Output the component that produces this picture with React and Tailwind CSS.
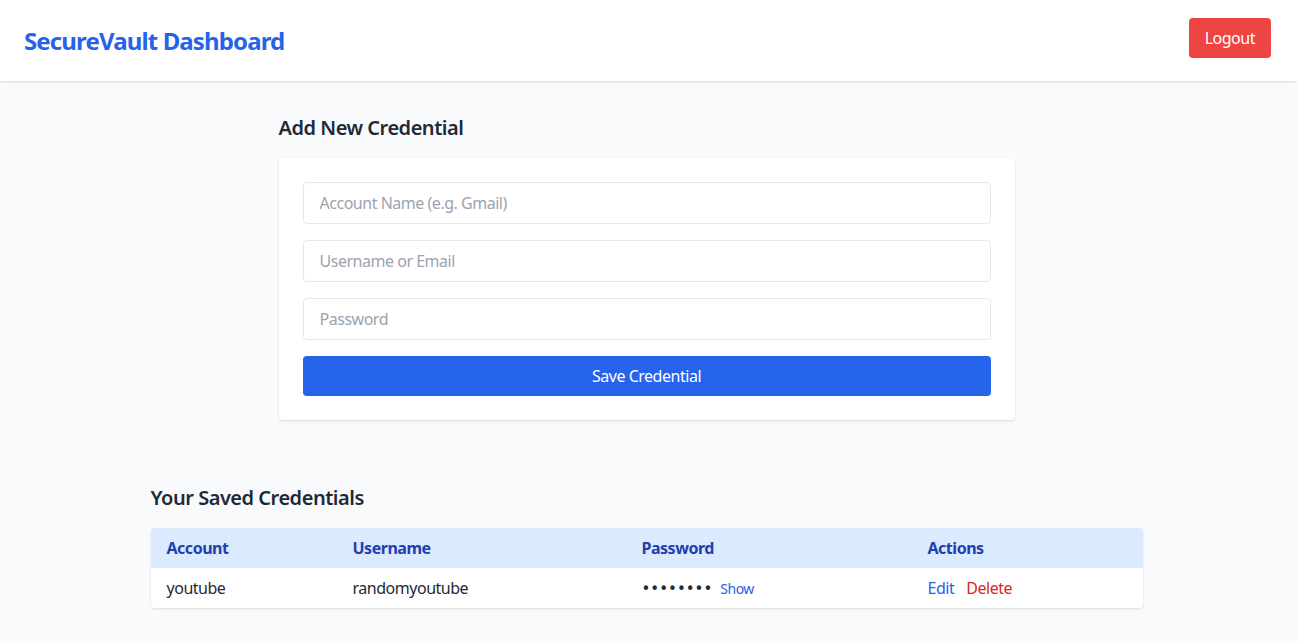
import React, { useState } from 'react';

const App = () => {
  const [show, setShow] = useState(false);

  return (
    <div className="min-h-screen bg-[#f9fafb] font-['Noto_Sans',sans-serif] tracking-[-0.03em]">
      <header className="bg-white shadow flex items-center justify-between pl-6 pr-[26px] h-[81px]">
        <h1 className="text-2xl font-bold text-[#2563eb] tracking-[-0.036em]">SecureVault Dashboard</h1>
        <button className="bg-[#ef4444] text-white px-4 h-10 rounded -mt-[5px]">Logout</button>
      </header>

      <main className="pt-[33px] pb-8 pr-1">
        <div className="max-w-3xl mx-auto px-4">
          <h2 className="text-xl font-semibold text-[#1f2937] mb-4">Add New Credential</h2>
          <form className="bg-white rounded shadow p-6 flex flex-col gap-4" onSubmit={(e) => e.preventDefault()}>
            <input
              type="text"
              placeholder="Account Name (e.g. Gmail)"
              className="w-full h-[42px] px-4 border border-[#e5e7eb] rounded placeholder-[#9ca3af] focus:outline-none"
            />
            <input
              type="text"
              placeholder="Username or Email"
              className="w-full h-[42px] px-4 border border-[#e5e7eb] rounded placeholder-[#9ca3af] focus:outline-none"
            />
            <input
              type="password"
              placeholder="Password"
              className="w-full h-[42px] px-4 border border-[#e5e7eb] rounded placeholder-[#9ca3af] focus:outline-none"
            />
            <button type="submit" className="w-full h-10 bg-[#2563eb] text-white rounded">
              Save Credential
            </button>
          </form>
        </div>

        <div className="max-w-5xl mx-auto px-4 mt-16">
          <h2 className="text-xl font-semibold text-[#1f2937] mb-4">Your Saved Credentials</h2>
          <div className="bg-white rounded shadow overflow-hidden">
            <table className="w-full text-left table-fixed">
              <thead className="bg-[#dbeafe] text-[#1e40af]">
                <tr className="h-10">
                  <th className="px-4 font-bold w-[186px]">Account</th>
                  <th className="px-4 font-bold w-[289px]">Username</th>
                  <th className="px-4 font-bold w-[286px]">Password</th>
                  <th className="px-4 font-bold">Actions</th>
                </tr>
              </thead>
              <tbody className="text-[#1f2937]">
                <tr className="h-10">
                  <td className="px-4">youtube</td>
                  <td className="px-4">randomyoutube</td>
                  <td className="px-4">
                    <span className="font-['DejaVu_Sans',sans-serif] text-[15px] tracking-normal">{show ? 'secret123' : '••••••••'}</span>
                    <button onClick={() => setShow(!show)} className="ml-2 text-sm text-[#2563eb]">
                      {show ? 'Hide' : 'Show'}
                    </button>
                  </td>
                  <td className="px-4">
                    <button className="text-[#2563eb] mr-3">Edit</button>
                    <button className="text-[#dc2626]">Delete</button>
                  </td>
                </tr>
              </tbody>
            </table>
          </div>
        </div>
      </main>
    </div>
  );
};

export default App;
